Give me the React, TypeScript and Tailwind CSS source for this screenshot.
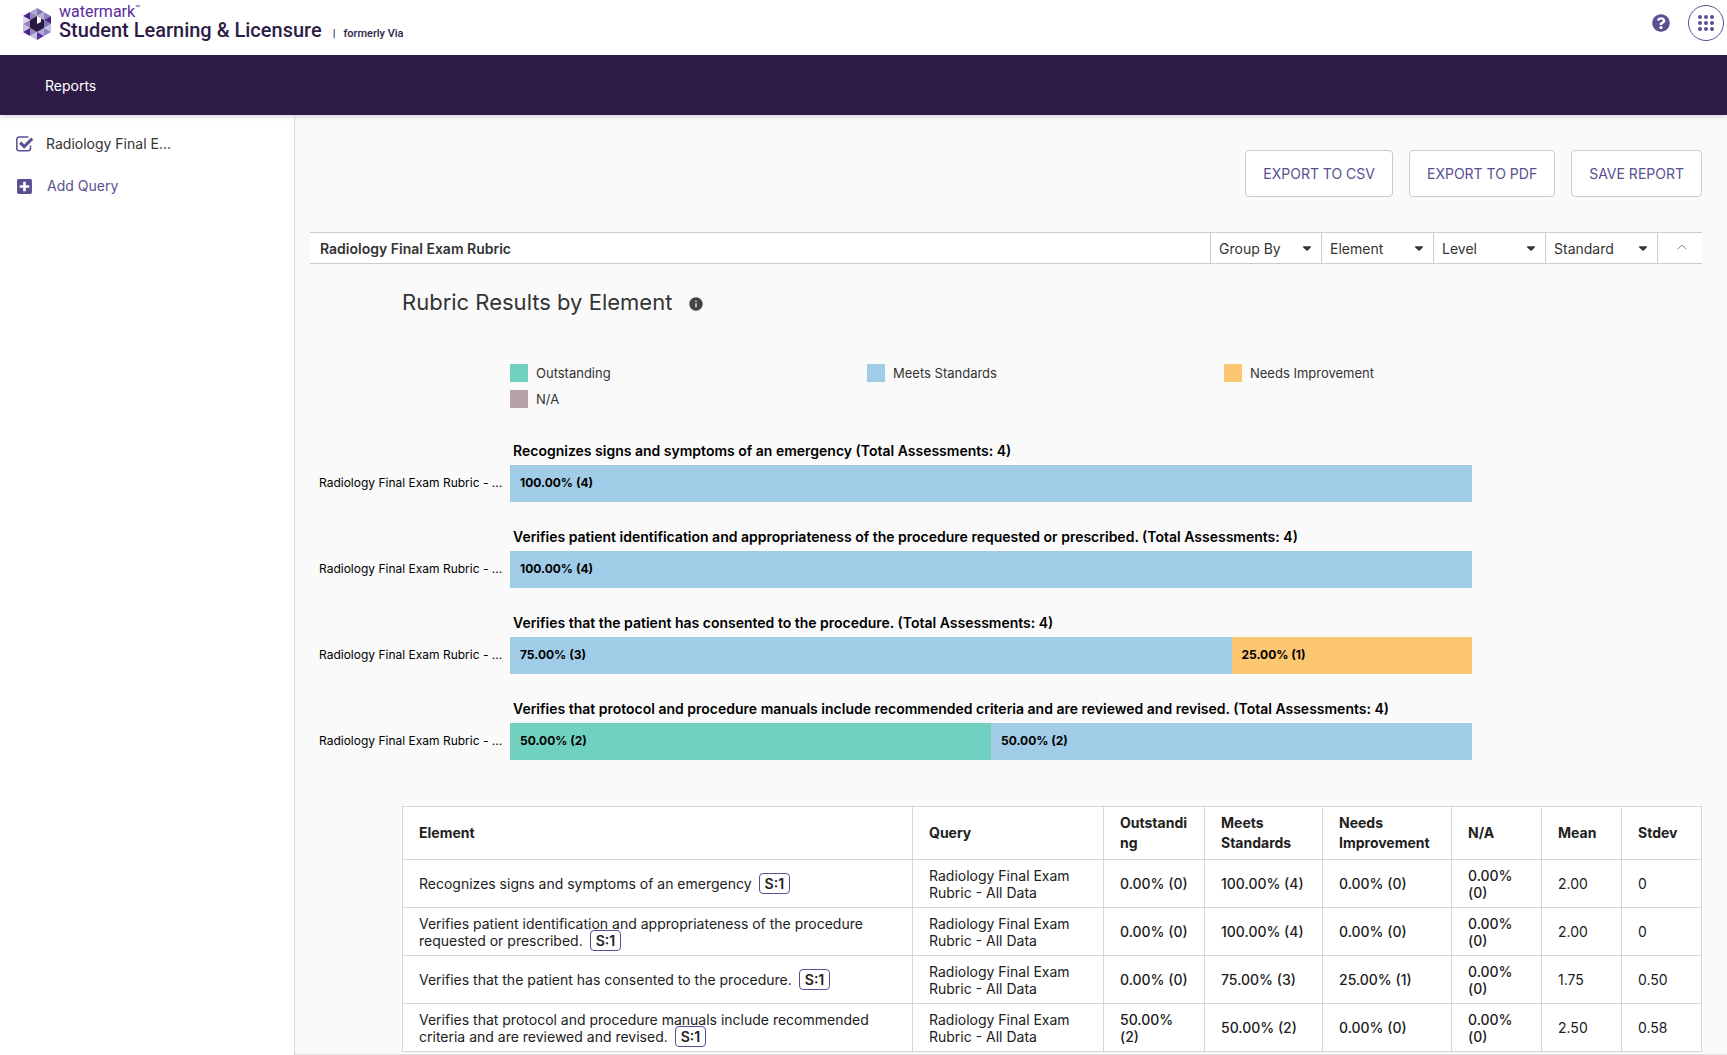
import { FaPlusSquare, FaQuestionCircle, FaCaretDown } from "react-icons/fa";
import { MdInfo } from "react-icons/md";
import { ChevronUp } from "lucide-react";

const LEGEND = [
  { label: "Outstanding", color: "bg-[#71d1c1]" },
  { label: "Meets Standards", color: "bg-[#a1cce8]" },
  { label: "Needs Improvement", color: "bg-[#fdc670]" },
  { label: "N/A", color: "bg-[#b8a1aa]" },
];

const CHART = [
  {
    title: "Recognizes signs and symptoms of an emergency (Total Assessments: 4)",
    segments: [{ value: 100, label: "100.00% (4)", color: "bg-[#a1cce8]" }],
  },
  {
    title:
      "Verifies patient identification and appropriateness of the procedure requested or prescribed. (Total Assessments: 4)",
    segments: [{ value: 100, label: "100.00% (4)", color: "bg-[#a1cce8]" }],
  },
  {
    title: "Verifies that the patient has consented to the procedure. (Total Assessments: 4)",
    segments: [
      { value: 75, label: "75.00% (3)", color: "bg-[#a1cce8]" },
      { value: 25, label: "25.00% (1)", color: "bg-[#fdc670]" },
    ],
  },
  {
    title:
      "Verifies that protocol and procedure manuals include recommended criteria and are reviewed and revised. (Total Assessments: 4)",
    segments: [
      { value: 50, label: "50.00% (2)", color: "bg-[#71d1c1]" },
      { value: 50, label: "50.00% (2)", color: "bg-[#a1cce8]" },
    ],
  },
];

const FILTERS = [
  { name: "Group By", width: "w-[111px]" },
  { name: "Element", width: "w-28" },
  { name: "Level", width: "w-28" },
  { name: "Standard", width: "w-28" },
];

const COLUMNS = [
  { label: "Element", width: "" },
  { label: "Query", width: "w-[191px]" },
  { label: "Outstanding", width: "w-[101px]" },
  { label: "Meets Standards", width: "w-[118px]" },
  { label: "Needs Improvement", width: "w-[129px]" },
  { label: "N/A", width: "w-[90px]" },
  { label: "Mean", width: "w-[80px]" },
  { label: "Stdev", width: "w-[80px]" },
];

const ROWS = [
  {
    element: "Recognizes signs and symptoms of an emergency",
    counts: ["0.00% (0)", "100.00% (4)", "0.00% (0)", "0.00% (0)"],
    mean: "2.00",
    stdev: "0",
  },
  {
    element:
      "Verifies patient identification and appropriateness of the procedure requested or prescribed.",
    counts: ["0.00% (0)", "100.00% (4)", "0.00% (0)", "0.00% (0)"],
    mean: "2.00",
    stdev: "0",
  },
  {
    element: "Verifies that the patient has consented to the procedure.",
    counts: ["0.00% (0)", "75.00% (3)", "25.00% (1)", "0.00% (0)"],
    mean: "1.75",
    stdev: "0.50",
  },
  {
    element:
      "Verifies that protocol and procedure manuals include recommended criteria and are reviewed and revised.",
    counts: ["50.00% (2)", "50.00% (2)", "0.00% (0)", "0.00% (0)"],
    mean: "2.50",
    stdev: "0.58",
  },
];

// Faceted hexagon: light and dark triangles around a dark cube
function LogoMark() {
  return (
    <svg viewBox="0 0 30 34" className="h-[34px] w-[30px]" aria-hidden="true">
      <path d="M15 1 22 5 15 9Z" fill="#8076b3" />
      <path d="M15 9 22 5V13Z" fill="#b9b2d8" />
      <path d="M15 1V9L8 5Z" fill="#b1a9d3" />
      <path d="M8 5 15 9 8 13Z" fill="#8d84bd" />
      <path d="M8 5V13L1 9Z" fill="#4b2486" />
      <path d="M22 5V13L29 9Z" fill="#8d84bd" />
      <path d="M22 5 29 9V5Z" fill="#ffffff" />
      <path d="M29 9V17L22 13Z" fill="#4b2486" />
      <path d="M1 17 8 13V21Z" fill="#8d84bd" />
      <path d="M1 9 8 13 1 17Z" fill="#d9d5ea" />
      <path d="M22 13 29 17 22 21Z" fill="#8076b3" />
      <path d="M29 17V25L22 21Z" fill="#c6c0e0" />
      <path d="M1 17 8 21 1 25Z" fill="#c6c0e0" />
      <path d="M1 25 8 21V29Z" fill="#4b2486" />
      <path d="M8 21 15 25 8 29Z" fill="#8d84bd" />
      <path d="M22 21 29 25 22 29Z" fill="#8d84bd" />
      <path d="M15 25 22 21V29Z" fill="#b1a9d3" />
      <path d="M15 25V33L8 29Z" fill="#c6c0e0" />
      <path d="M15 25 22 29 15 33Z" fill="#5b2b9c" />
      <path d="M15 9 22 13V21L15 25 8 21V13Z" fill="#2a1840" />
      <path d="M15 9 19 11V15L15 17Z" fill="#ffffff" />
    </svg>
  );
}

function CheckSquareIcon() {
  return (
    <svg viewBox="0 0 18 16" className="h-4 w-[18px]" aria-hidden="true">
      <path
        d="M14.5 9.5v2.8a2.4 2.4 0 0 1-2.4 2.4H3.2A2.4 2.4 0 0 1 .8 12.300V3.400A2.400 2.400 0 0 1 3.200 1h9.200"
        fill="none"
        stroke="#585092"
        strokeWidth="1.500"
      />
      <path d="m4.200 6.600 4 4 8-8" fill="none" stroke="#585092" strokeWidth="3" />
    </svg>
  );
}

function Header() {
  return (
    <header className="flex h-[55px] items-center justify-between bg-white pr-[3px] pl-[22px]">
      <div className="flex items-center gap-[7px] pb-[7px]">
        <LogoMark />
        <div className="font-[Roboto,sans-serif] text-[#2e1c47]">
          <div className="flex text-base leading-4 text-[#5b2b9c]">
            watermark<span className="text-[8px] leading-[10px]">™</span>
          </div>
          <div className="flex items-baseline text-xl leading-5 font-medium">
            Student Learning &amp; Licensure
            <span className="ml-[11px] text-[11px]">|</span>
            <span className="ml-2 text-[11px]">formerly Via</span>
          </div>
        </div>
      </div>
      <div className="flex items-center gap-[18px] pb-[10px]">
        <button type="button" aria-label="Help">
          <FaQuestionCircle className="size-[18px] text-[#585092]" />
        </button>
        <button
          type="button"
          aria-label="Apps"
          className="flex size-9 items-center justify-center rounded-full border border-[#585092]"
        >
          <span className="grid grid-cols-3 gap-[2px]">
            {Array.from({ length: 9 }, (_, i) => (
              <span key={i} className="size-1 rounded-full bg-[#585092]" />
            ))}
          </span>
        </button>
      </div>
    </header>
  );
}

function Sidebar() {
  return (
    <aside className="w-[295px] shrink-0 border-r border-[#d4d4d4] bg-white px-4 pt-[17px] text-sm">
      <a href="#query" className="flex h-6 items-center gap-3 text-[#333]">
        <CheckSquareIcon />
        Radiology Final E...
      </a>
      <button type="button" className="mt-[18px] flex h-6 items-center gap-[14px] text-[#585092]">
        <FaPlusSquare className="size-[17px]" />
        Add Query
      </button>
    </aside>
  );
}

function FilterBar() {
  return (
    <div className="mt-[35px] flex h-8 items-stretch border-y border-[#ccc] bg-white text-sm text-[#333]">
      <h2 className="flex flex-1 items-center pt-px pl-[10px] font-semibold">
        Radiology Final Exam Rubric
      </h2>
      {FILTERS.map(({ name, width }) => (
        <div key={name} className={`relative border-l border-[#ccc] ${width}`}>
          <select
            aria-label={name}
            className="h-full w-full appearance-none bg-transparent pt-px pl-2 outline-none"
          >
            <option>{name}</option>
          </select>
          <FaCaretDown className="pointer-events-none absolute top-2 right-[7px] size-[14px]" />
        </div>
      ))}
      <button
        type="button"
        aria-label="Collapse"
        className="flex w-[45px] items-center justify-center border-l border-[#ccc] pb-[3px] pl-[3px]"
      >
        <ChevronUp className="size-4 text-[#888]" strokeWidth={1.5} />
      </button>
    </div>
  );
}

function Chart() {
  return (
    <section aria-label="Rubric results chart" className="mr-[230px] ml-2">
      <ul className="ml-[192px] grid grid-cols-[357px_357px_1fr] gap-y-2 text-[13px] leading-[18px] text-[#333]">
        {LEGEND.map((item) => (
          <li key={item.label} className="flex gap-2">
            <span className={`size-[18px] ${item.color}`} />
            {item.label}
          </li>
        ))}
      </ul>
      <div className="mt-[33px] flex flex-col gap-[25px]">
        {CHART.map((row) => (
          <div key={row.title}>
            <h4 className="ml-[195px] pb-1 text-sm leading-5 font-semibold whitespace-nowrap text-black">
              {row.title}
            </h4>
            <div className="flex h-[37px] text-xs leading-[35px] text-black">
              <span className="w-[192px] shrink-0 pl-px">Radiology Final Exam Rubric - ...</span>
              <div className="flex flex-1">
                {row.segments.map((segment) => (
                  <div
                    key={segment.color}
                    className={`pl-[10px] font-bold ${segment.color}`}
                    style={{ width: `${segment.value}%` }}
                  >
                    {segment.label}
                  </div>
                ))}
              </div>
            </div>
          </div>
        ))}
      </div>
    </section>
  );
}

function ResultsTable() {
  return (
    <table className="mt-[46px] ml-[92px] w-[calc(100%-92px)] table-fixed border-collapse bg-white text-left text-sm text-[#212121]">
      <thead>
        <tr className="h-[53px]">
          {COLUMNS.map((column) => (
            <th
              key={column.label}
              className={`border border-[#d6d6d6] px-4 leading-5 font-bold wrap-anywhere ${column.width}`}
            >
              {column.label}
            </th>
          ))}
        </tr>
      </thead>
      <tbody className="leading-[17px]">
        {ROWS.map((row) => (
          <tr key={row.element} className="h-12">
            <td className="border border-[#d6d6d6] px-4">
              {row.element}
              <button
                type="button"
                className="-my-1 ml-[7px] rounded border border-[#585092] px-[5px] leading-[19px] font-semibold"
              >
                S:1
              </button>
            </td>
            <td className="border border-[#d6d6d6] px-4">Radiology Final Exam Rubric - All Data</td>
            {row.counts.map((count, index) => (
              <td key={index} className="border border-[#d6d6d6] px-4 font-medium">
                {count}
              </td>
            ))}
            <td className="border border-[#d6d6d6] px-4">{row.mean}</td>
            <td className="border border-[#d6d6d6] px-4">{row.stdev}</td>
          </tr>
        ))}
      </tbody>
    </table>
  );
}

export default function App() {
  return (
    <div className="flex min-h-screen flex-col bg-[#fafafa] font-[Inter,sans-serif]">
      <Header />
      <nav className="relative flex h-[60px] items-center bg-[#2e1c47] px-[45px] pt-px text-sm text-white shadow-[0_2px_5px_#d9d6e4]">
        <a href="#reports">Reports</a>
      </nav>
      <div className="flex flex-1">
        <Sidebar />
        <main className="min-w-0 flex-1 border-b border-[#e4e4e4] pr-[25px] pl-[15px]">
          <div className="mt-[35px] flex justify-end gap-4">
            {["Export to CSV", "Export to PDF", "Save Report"].map((label) => (
              <button
                key={label}
                type="button"
                className="h-[47px] rounded border border-[#ccc] bg-white px-[17px] text-sm text-[#585092] uppercase"
              >
                {label}
              </button>
            ))}
          </div>
          <FilterBar />
          <h3 className="mt-[22px] mb-[46px] ml-[92px] flex items-center gap-4 text-[22px] leading-8 text-[#333]">
            Rubric Results by Element
            <MdInfo className="mt-1 size-4 text-[#444]" />
          </h3>
          <Chart />
          <ResultsTable />
        </main>
      </div>
    </div>
  );
}
